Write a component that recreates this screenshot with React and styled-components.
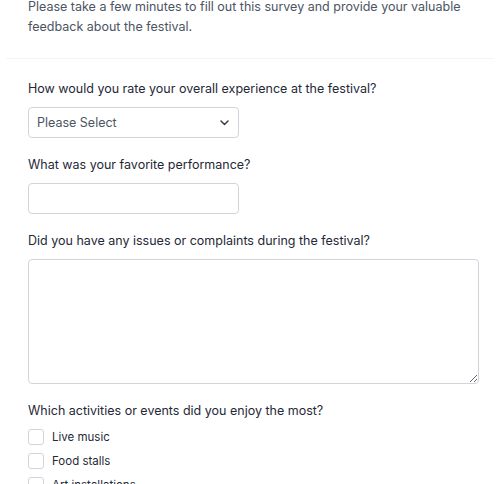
import React from "react";
import styled, { createGlobalStyle } from "styled-components";

const GlobalStyle = createGlobalStyle`
  html, body {
    margin: 0;
    padding: 0;
    background: #ffffff;
    font-family: Inter, "Noto Sans", sans-serif;
  }
  * { box-sizing: border-box; }
`;

const Page = styled.div`
  margin-top: -3px;
  padding: 0 6px;
`;

const Header = styled.div`
  padding: 0 22px 21px;
  border-bottom: 1px solid #f3f4f6;
`;

const Intro = styled.p`
  margin: 0;
  font-size: 12.5px;
  line-height: 20px;
  color: #4b5563;
`;

const Form = styled.form`
  padding: 20px 22px 0;
  display: flex;
  flex-direction: column;
  gap: 17px;
`;

const Field = styled.div`
  display: flex;
  flex-direction: column;
  gap: 8px;
`;

const Label = styled.label`
  font-size: 12.5px;
  line-height: 20px;
  color: #1f2937;
`;

const SelectWrap = styled.div`
  position: relative;
  width: 211px;
`;

const Select = styled.select`
  appearance: none;
  width: 100%;
  height: 31px;
  padding: 0 28px 0 8px;
  border: 1px solid #d1d5db;
  border-radius: 4px;
  background: #fff;
  font-family: inherit;
  font-size: 12.5px;
  color: #4b5563;
`;

const Chevron = styled.svg`
  position: absolute;
  right: 10px;
  top: 13px;
  pointer-events: none;
`;

const Input = styled.input`
  width: 211px;
  height: 31px;
  padding: 0 8px;
  border: 1px solid #d1d5db;
  border-radius: 4px;
  font-family: inherit;
  font-size: 12.5px;
`;

const TextArea = styled.textarea`
  width: 451px;
  height: 125px;
  padding: 8px;
  border: 1px solid #d1d5db;
  border-radius: 4px;
  font-family: inherit;
  font-size: 12.5px;
  resize: vertical;
  display: block;
`;

const Options = styled.div`
  display: flex;
  flex-direction: column;
  gap: 8px;
`;

const Option = styled.label`
  display: flex;
  align-items: center;
  gap: 8px;
  font-size: 11.5px;
  line-height: 16px;
  color: #1f2937;
`;

const Box = styled.span`
  width: 16px;
  height: 16px;
  border: 1px solid #d1d5db;
  border-radius: 3px;
  background: #fff;
  flex: none;
`;

const activities = ["Live music", "Food stalls", "Art installations", "Workshops"];

export default function App() {
  return (
    <>
      <GlobalStyle />
      <Page>
        <Header>
          <Intro>
            Please take a few minutes to fill out this survey and provide your valuable
            feedback about the festival.
          </Intro>
        </Header>
        <Form>
          <Field>
            <Label>How would you rate your overall experience at the festival?</Label>
            <SelectWrap>
              <Select defaultValue="">
                <option value="">Please Select</option>
                <option>Excellent</option>
                <option>Good</option>
                <option>Average</option>
                <option>Poor</option>
              </Select>
              <Chevron width="9" height="6" viewBox="0 0 9 6" fill="none">
                <path d="M1 1l3.5 3.5L8 1" stroke="#374151" strokeWidth="1.5" strokeLinecap="round" strokeLinejoin="round" />
              </Chevron>
            </SelectWrap>
          </Field>
          <Field>
            <Label>What was your favorite performance?</Label>
            <Input type="text" />
          </Field>
          <Field>
            <Label>Did you have any issues or complaints during the festival?</Label>
            <TextArea />
          </Field>
          <Field>
            <Label>Which activities or events did you enjoy the most?</Label>
            <Options>
              {activities.map((a) => (
                <Option key={a}>
                  <Box />
                  {a}
                </Option>
              ))}
            </Options>
          </Field>
        </Form>
      </Page>
    </>
  );
}
